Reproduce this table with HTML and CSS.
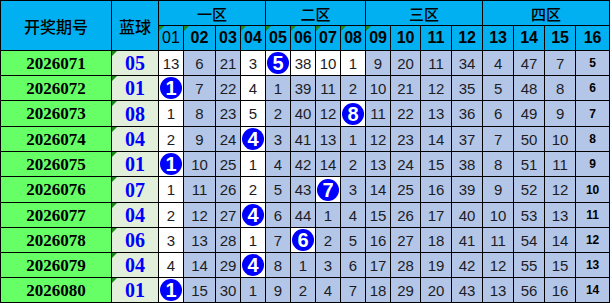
FILE: index.html
```html
<!DOCTYPE html>
<html lang="zh">
<head>
    <meta charset="UTF-8">
    <meta name="viewport" content="width=device-width, initial-scale=1.0">
    <title>蓝球走势</title>
    <link rel="stylesheet" href="styles.css">
</head>
<body>
    <table class="trend">
        <colgroup>
            <col style="width:111px"><col style="width:47px">
            <col style="width:25px"><col style="width:32px"><col style="width:25px"><col style="width:25px">
            <col style="width:25px"><col style="width:25px"><col style="width:25px"><col style="width:25px">
            <col style="width:25px"><col style="width:30px"><col style="width:31px"><col style="width:31px">
            <col style="width:31px"><col style="width:31px"><col style="width:31px"><col style="width:34px">
        </colgroup>
        <thead>
            <tr class="zones">
                <th rowspan="2" class="head-cn">开奖期号</th>
                <th rowspan="2" class="head-cn">蓝球</th>
                <th colspan="4" class="zone">一区</th>
                <th colspan="4" class="zone">二区</th>
                <th colspan="4" class="zone">三区</th>
                <th colspan="4" class="zone">四区</th>
            </tr>
            <tr class="nums">
                <th class="mark thin">01</th><th class="mark">02</th><th>03</th><th class="mark">04</th>
                <th class="mark">05</th><th class="mark">06</th><th class="mark">07</th><th class="mark">08</th>
                <th class="mark">09</th><th>10</th><th>11</th><th>12</th>
                <th>13</th><th>14</th><th>15</th><th>16</th>
            </tr>
        </thead>
        <tbody>
            <tr>
                <td class="issue">2026071</td><td class="blue mark">05</td>
                <td class="w">13</td><td>6</td><td>21</td><td class="w">3</td>
                <td class="w"><span class="ball">5</span></td><td class="w">38</td><td class="w">10</td><td class="w">1</td>
                <td>9</td><td>20</td><td>11</td><td>34</td>
                <td>4</td><td>47</td><td>7</td><td class="last">5</td>
            </tr>
            <tr>
                <td class="issue">2026072</td><td class="blue mark">01</td>
                <td class="w"><span class="ball">1</span></td><td>7</td><td>22</td><td class="w">4</td>
                <td>1</td><td>39</td><td>11</td><td>2</td>
                <td>10</td><td>21</td><td>12</td><td>35</td>
                <td>5</td><td>48</td><td>8</td><td class="last">6</td>
            </tr>
            <tr class="tall">
                <td class="issue">2026073</td><td class="blue mark">08</td>
                <td class="w">1</td><td>8</td><td>23</td><td class="w">5</td>
                <td>2</td><td>40</td><td>12</td><td class="w"><span class="ball">8</span></td>
                <td>11</td><td>22</td><td>13</td><td>36</td>
                <td>6</td><td>49</td><td>9</td><td class="last">7</td>
            </tr>
            <tr>
                <td class="issue">2026074</td><td class="blue mark">04</td>
                <td class="w">2</td><td>9</td><td>24</td><td class="w"><span class="ball">4</span></td>
                <td>3</td><td>41</td><td>13</td><td>1</td>
                <td>12</td><td>23</td><td>14</td><td>37</td>
                <td>7</td><td>50</td><td>10</td><td class="last">8</td>
            </tr>
            <tr>
                <td class="issue">2026075</td><td class="blue mark">01</td>
                <td class="w"><span class="ball">1</span></td><td>10</td><td>25</td><td class="w">1</td>
                <td>4</td><td>42</td><td>14</td><td>2</td>
                <td>13</td><td>24</td><td>15</td><td>38</td>
                <td>8</td><td>51</td><td>11</td><td class="last">9</td>
            </tr>
            <tr class="tall">
                <td class="issue">2026076</td><td class="blue mark">07</td>
                <td class="w">1</td><td>11</td><td>26</td><td class="w">2</td>
                <td>5</td><td>43</td><td class="w"><span class="ball">7</span></td><td>3</td>
                <td>14</td><td>25</td><td>16</td><td>39</td>
                <td>9</td><td>52</td><td>12</td><td class="last">10</td>
            </tr>
            <tr>
                <td class="issue">2026077</td><td class="blue mark">04</td>
                <td class="w">2</td><td>12</td><td>27</td><td class="w"><span class="ball">4</span></td>
                <td>6</td><td>44</td><td>1</td><td>4</td>
                <td>15</td><td>26</td><td>17</td><td>40</td>
                <td>10</td><td>53</td><td>13</td><td class="last">11</td>
            </tr>
            <tr>
                <td class="issue">2026078</td><td class="blue mark">06</td>
                <td class="w">3</td><td>13</td><td>28</td><td class="w">1</td>
                <td>7</td><td class="w"><span class="ball">6</span></td><td>2</td><td>5</td>
                <td>16</td><td>27</td><td>18</td><td>41</td>
                <td>11</td><td>54</td><td>14</td><td class="last">12</td>
            </tr>
            <tr>
                <td class="issue">2026079</td><td class="blue mark">04</td>
                <td class="w">4</td><td>14</td><td>29</td><td class="w"><span class="ball">4</span></td>
                <td>8</td><td>1</td><td>3</td><td>6</td>
                <td>17</td><td>28</td><td>19</td><td>42</td>
                <td>12</td><td>55</td><td>15</td><td class="last">13</td>
            </tr>
            <tr>
                <td class="issue">2026080</td><td class="blue mark">01</td>
                <td class="w"><span class="ball">1</span></td><td>15</td><td>30</td><td>1</td>
                <td>9</td><td>2</td><td>4</td><td>7</td>
                <td>18</td><td>29</td><td>20</td><td>43</td>
                <td>13</td><td>56</td><td>16</td><td class="last">14</td>
            </tr>
        </tbody>
    </table>
</body>
</html>
```

FILE: styles.css
```css
body {
    margin: 0;
    background: #ffffff;
}
.trend {
    border-collapse: collapse;
    table-layout: fixed;
    width: 610px;
    font-family: "Liberation Sans", Arial, sans-serif;
    color: #1c1c24;
}
.trend th, .trend td {
    border: 1px solid #000000;
    padding: 0;
    text-align: center;
    height: 24px;
    line-height: 1;
    position: relative;
}
.trend tr.tall td {
    height: 25px;
}

/* header */
.trend th {
    background-color: #00B0F0;
    color: #000000;
}
.head-cn {
    font-family: "Noto Sans CJK SC", sans-serif;
    font-size: 16px;
    font-weight: 500;
}
.zone {
    font-family: "Noto Sans CJK SC", sans-serif;
    font-size: 15px;
    font-weight: 500;
}
.nums th {
    font-size: 16px;
    font-weight: bold;
}
.nums th.thin {
    font-weight: normal;
}

/* body cells */
.trend td {
    background-color: #B4C6E7;
    font-size: 15px;
}
.trend td.w {
    background-color: #ffffff;
}
.trend td.issue {
    background-color: #66FF66;
    font-family: "Liberation Serif", "Times New Roman", serif;
    font-weight: bold;
    font-size: 17px;
    color: #000000;
}
.trend td.blue {
    background-color: #E2EFDA;
    font-family: "Liberation Serif", "Times New Roman", serif;
    font-weight: bold;
    font-size: 20px;
    color: #0000FF;
}
.trend td.last {
    font-size: 12px;
    font-weight: bold;
    color: #000000;
}

/* drawn number */
.ball {
    display: inline-flex;
    align-items: center;
    justify-content: center;
    width: 22px;
    height: 22px;
    border-radius: 50%;
    background-color: #0000FF;
    color: #ffffff;
    font-weight: bold;
    font-size: 20px;
    vertical-align: middle;
}

/* little green corner flag, like a spreadsheet note */
.mark::before {
    content: "";
    position: absolute;
    left: 0;
    top: 0;
    border-top: 5px solid #1E8A1E;
    border-right: 5px solid transparent;
}
```
